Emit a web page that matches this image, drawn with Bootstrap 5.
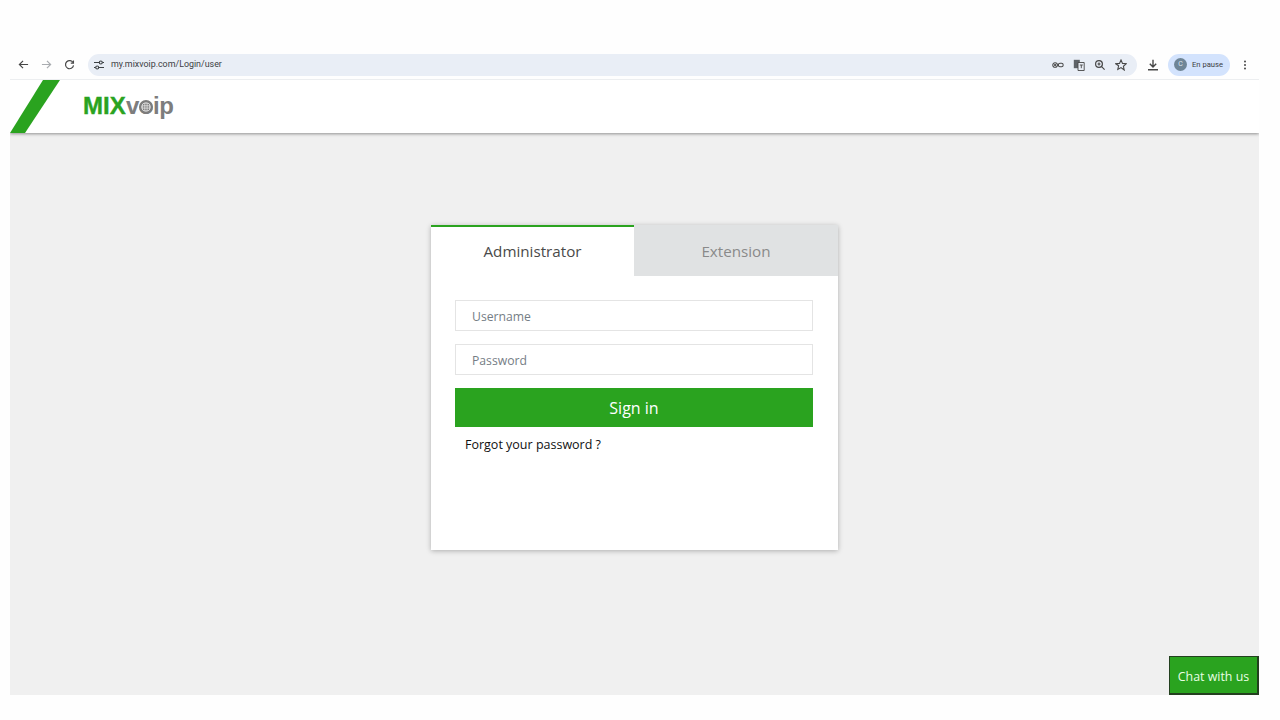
<!DOCTYPE html>
<html lang="en">
<head>
<meta charset="utf-8">
<title>MIXvoip Login</title>
<link href="https://cdn.jsdelivr.net/npm/bootstrap@5.3.0/dist/css/bootstrap.min.css" rel="stylesheet">
<style>
html,body{height:720px;overflow:hidden}
body{background:#fefefe;font-family:"Open Sans","Noto Sans",sans-serif;padding:50px 21px 25px 10px}
.frame-wrap{height:645px}
.browser-bar{height:30px;background:#fefefe;border-bottom:1px solid #eceef0;padding:0 0 0 8px;font-family:"Roboto",sans-serif;color:#474747}
.tool-ico{width:12px;height:12px;flex:none}
.nav-ico{margin-right:12px;width:11px;height:11px}
.addr{height:22px;width:1049px;flex:none;background:#e9eef6;border-radius:11px;padding:0 10px 0 5px;margin-left:1px}
.addr-url{font-size:8.9px;color:#3c4043;margin-left:6px}
.addr-tools{gap:9px}
.pause-pill{height:22px;width:62px;flex:none;background:#d3e3fd;border-radius:11px;font-size:7.6px;color:#3c4043;padding-left:6px;gap:5px;margin-left:9px}
.dl-ico{margin-left:10px}
.more-ico{margin:0 0 0 9px}
.avatar{width:13px;height:13px;border-radius:50%;background:#6f8596;color:#dfe7ee;font-size:7px;line-height:13px;text-align:center}
.site-header{height:53px;background:#fff;box-shadow:0 1px 3px rgba(0,0,0,.4);clip-path:inset(0 0 -6px 0);position:relative;z-index:1}
.slash{width:52px;height:53px;flex:none}
.logo-text{font-family:"Liberation Sans",sans-serif;font-weight:700;font-size:24px;letter-spacing:-.5px;line-height:52px;margin-left:21px;color:#7d7d7d}
.logo-green{color:#2aa31f;letter-spacing:.1px;-webkit-text-stroke:.4px #2aa31f}
.logo-o{position:relative;display:inline-block}
.logo-grid{position:absolute;left:0;top:20px;width:14px;height:14px}
.page-main{height:562px;background:#f0f0f0;padding-top:92px}
.login-box{width:407px;height:325px;background:#fff;box-shadow:0 1px 5px rgba(0,0,0,.28)}
.tab-on,.tab-off{height:51px;font-size:15.2px;text-align:center}
.tab-on{width:203px;border-top:2px solid #2aa31f;color:#4a4a4a;line-height:49px;background:#fff}
.tab-off{width:204px;background:#e0e2e3;color:#8a8a8a;line-height:53px}
.login-form{padding:24px 25px 0 24px}
.field{height:31px;border:1px solid #e4e4e4;border-radius:0;font-size:12.2px;padding:2px 16px 0;margin-bottom:13px;color:#555}
.field::placeholder{color:#757d85;opacity:1}
.signin{height:39px;background:#2aa31f;border:0;border-radius:0;color:#fff;font-size:16px;padding:0}
.signin:hover{background:#2aa31f;color:#fff}
.forgot{font-size:12.5px;color:#111;text-decoration:none;display:block;margin:8px 0 0 10px;line-height:19px}
.chat-btn{position:absolute;left:1169px;top:656px;width:90px;height:39px;background:#2aa31f;color:#e8ffe4;border:1px solid #23401f;border-bottom-width:2px;border-right-width:2px;border-radius:0;font-size:12.4px;padding:4px 0 0;white-space:nowrap}
.chat-btn:hover{background:#2aa31f;color:#e8ffe4}
</style>
</head>
<body>
<div class="frame-wrap d-flex flex-column">
  <div class="browser-bar d-flex align-items-center">
    <svg class="tool-ico nav-ico" viewBox="0 0 12 12" fill="none" stroke="#474747" stroke-width="1.3"><path d="M11 6H1.5M5.5 2 1.5 6l4 4"/></svg>
    <svg class="tool-ico nav-ico" viewBox="0 0 12 12" fill="none" stroke="#a9acb0" stroke-width="1.3"><path d="M1 6h9.5M6.5 2l4 4-4 4"/></svg>
    <svg class="tool-ico nav-ico" viewBox="0 0 12 12" fill="none" stroke="#474747" stroke-width="1.3"><path d="M10 4.2A4.4 4.4 0 1 0 10.4 7"/><path d="M10.4 1.5v3H7.4" stroke-width="1.1"/></svg>
    <div class="addr d-flex align-items-center">
      <svg class="tool-ico" viewBox="0 0 12 12" fill="none" stroke="#3c4043" stroke-width="1.1"><path d="M1 3.5h5M9.5 3.5H11M1 8.5h1.5M6 8.5h5"/><circle cx="7.8" cy="3.5" r="1.5"/><circle cx="4.2" cy="8.5" r="1.5"/></svg>
      <span class="addr-url">my.mixvoip.com/Login/user</span>
      <div class="addr-tools ms-auto d-flex align-items-center">
        <svg class="tool-ico" viewBox="0 0 14 12" fill="none" stroke="#474747" stroke-width="1.2"><circle cx="3.6" cy="6" r="2.7"/><circle cx="3.6" cy="6" r=".7" fill="#474747"/><rect x="7.5" y="4" width="5.5" height="4" rx="1.8"/><path d="M6.3 6h1.2"/></svg>
        <svg class="tool-ico" viewBox="0 0 12 12" fill="#5f6368"><path d="M.8.8h6v8.4h-6z"/><path d="M5 3.5h6.2v8H5z" fill="#e9eef6" stroke="#474747" stroke-width=".9"/><path d="M6.8 6h3M8.3 6v3.2" stroke="#474747" fill="none" stroke-width=".9"/></svg>
        <svg class="tool-ico" viewBox="0 0 12 12" fill="none" stroke="#474747" stroke-width="1.2"><circle cx="5" cy="5" r="3.4"/><path d="m7.6 7.6 3 3M3.5 5h3M5 3.5v3"/></svg>
        <svg class="tool-ico" viewBox="0 0 12 12" fill="none" stroke="#474747" stroke-width="1.1"><path d="m6 1 1.5 3.4 3.7.4-2.8 2.5.8 3.7L6 8.6 2.8 10.5l.8-3.7L.8 4.8l3.7-.4z"/></svg>
      </div>
    </div>
    <svg class="tool-ico dl-ico" viewBox="0 0 12 12" fill="none" stroke="#474747" stroke-width="1.4"><path d="M6 .8v7M2.8 4.8 6 8l3.2-3.2M1 10.8h10"/></svg>
    <div class="pause-pill d-flex align-items-center"><span class="avatar">C</span><span>En pause</span></div>
    <svg class="tool-ico more-ico" viewBox="0 0 12 12" fill="#474747"><circle cx="6" cy="2.5" r="1"/><circle cx="6" cy="6" r="1"/><circle cx="6" cy="9.5" r="1"/></svg>
  </div>
  <header class="site-header d-flex">
    <svg class="slash" viewBox="0 0 52 53"><polygon points="33,0 50,0 15,53 0,53" fill="#2aa31f"/></svg>
    <div class="logo-text"><span class="logo-green">MIX</span>v<span class="logo-o">o<svg class="logo-grid" viewBox="0 0 14 14"><circle cx="7" cy="7" r="5.8" fill="#fff" stroke="#7d7d7d" stroke-width="2.4"/><rect x="3.6" y="3.6" width="6.8" height="6.8" rx="2" fill="#7d7d7d"/><path d="M3.6 5.8h6.8M3.6 8.1h6.8M5.8 3.6v6.8M8.1 3.6v6.8" stroke="#fff" stroke-width=".6"/></svg></span>ip</div>
  </header>
  <main class="page-main d-flex justify-content-center align-items-start">
    <div class="login-box">
      <div class="d-flex">
        <div class="tab-on">Administrator</div>
        <div class="tab-off">Extension</div>
      </div>
      <form class="login-form">
        <input class="form-control field" type="text" placeholder="Username">
        <input class="form-control field" type="password" placeholder="Password">
        <button type="button" class="btn signin w-100">Sign in</button>
        <a class="forgot" href="#">Forgot your password ?</a>
      </form>
    </div>
  </main>
</div>
<button type="button" class="btn chat-btn">Chat with us</button>
<script src="https://cdn.jsdelivr.net/npm/bootstrap@5.3.0/dist/js/bootstrap.bundle.min.js"></script>
</body>
</html>
